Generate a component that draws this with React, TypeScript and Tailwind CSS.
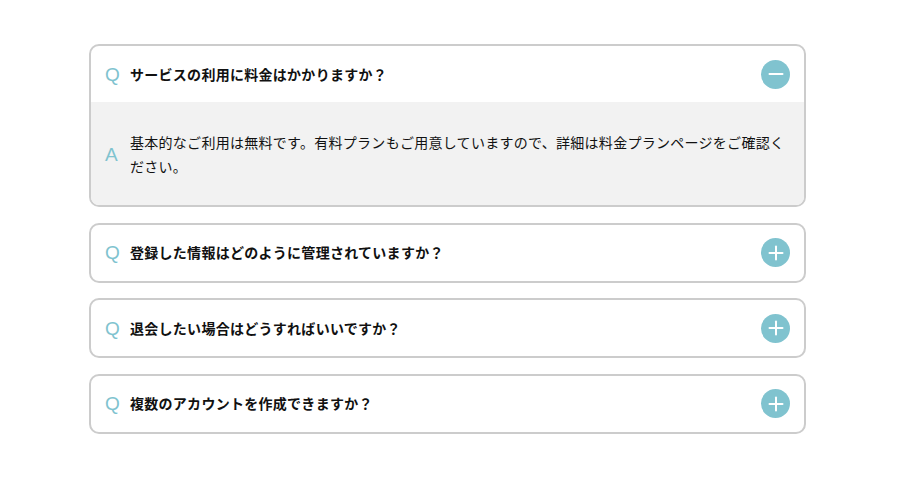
import React, { useState } from "react";

const items = [
  {
    q: "サービスの利用に料金はかかりますか？",
    a: "基本的なご利用は無料です。有料プランもご用意していますので、詳細は料金プランページをご確認ください。",
  },
  {
    q: "登録した情報はどのように管理されていますか？",
    a: "お客様の情報は暗号化され、安全に管理されています。",
  },
  {
    q: "退会したい場合はどうすればいいですか？",
    a: "マイページの設定画面から退会手続きを行うことができます。",
  },
  {
    q: "複数のアカウントを作成できますか？",
    a: "おひとり様につき1つのアカウントのみ作成可能です。",
  },
];

function ToggleIcon({ open }: { open: boolean }) {
  return (
    <span className="flex h-[29px] w-[29px] shrink-0 items-center justify-center rounded-full bg-[#80c3cf]">
      <svg width="16" height="16" viewBox="0 0 16 16" fill="none">
        <line x1="1.5" y1="8" x2="14.5" y2="8" stroke="white" strokeWidth="2" strokeLinecap="round" />
        {!open && (
          <line x1="8" y1="1.5" x2="8" y2="14.5" stroke="white" strokeWidth="2" strokeLinecap="round" />
        )}
      </svg>
    </span>
  );
}

export default function App() {
  const [openIdx, setOpenIdx] = useState<number | null>(0);
  const font = { fontFamily: '"Noto Sans CJK JP", "Noto Sans", sans-serif' };
  return (
    <div className="min-h-[501px] w-full bg-white pt-[44px]" style={font}>
      <div className="ml-[89px] flex w-[717px] flex-col gap-[15.5px]">
        {items.map((it, i) => {
          const open = openIdx === i;
          return (
            <div key={i} className="overflow-hidden rounded-[10px] border-2 border-[#cccccc] bg-white">
              <button
                type="button"
                onClick={() => setOpenIdx(open ? null : i)}
                className="flex h-[56px] w-full items-center px-[14px] text-left"
              >
                <span className="w-[25px] shrink-0 text-[19px] leading-none text-[#80c3cf]" style={{ fontFamily: '"Liberation Sans", Arial, sans-serif' }}>
                  Q
                </span>
                <span className="flex-1 text-[14px] font-bold tracking-[0.02em] text-[#111]">{it.q}</span>
                <ToggleIcon open={open} />
              </button>
              {open && (
                <div className="flex items-center bg-[#f2f2f2] px-[14px] pb-[27px] pt-[28px]">
                  <span className="w-[25px] shrink-0 text-[19px] leading-none text-[#80c3cf]" style={{ fontFamily: '"Liberation Sans", Arial, sans-serif' }}>
                    A
                  </span>
                  <p className="flex-1 text-[14px] leading-[24px] tracking-[0.02em] text-[#111]">{it.a}</p>
                </div>
              )}
            </div>
          );
        })}
      </div>
    </div>
  );
}
